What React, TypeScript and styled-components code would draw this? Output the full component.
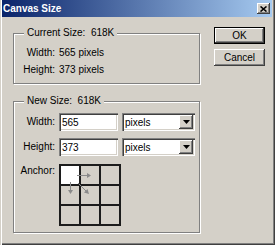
import styled, { createGlobalStyle } from "styled-components";

const GlobalStyle = createGlobalStyle`
  html, body {
    margin: 0;
    padding: 0;
    background: #d4d0c8;
  }
  body {
    font-family: "Liberation Sans", Arial, sans-serif;
    font-size: 10px;
    color: #000;
  }
`;

const Window = styled.div`
  width: 275px;
  height: 245px;
  box-sizing: border-box;
  background: #d4d0c8;
  padding: 0 3px 3px 2px;
  box-shadow: inset 1px 0 #d4d0c8, inset 2px 0 #fff, inset -1px -1px #404040,
    inset -2px -2px #808080;
  display: flex;
  flex-direction: column;
`;

const TitleBar = styled.div`
  height: 17px;
  flex: none;
  display: flex;
  align-items: center;
  justify-content: space-between;
  padding: 0 2px 0 1px;
  background: linear-gradient(to right, #0a246a, #a6caf0);
`;

const Title = styled.span`
  color: #fff;
  font-weight: bold;
  font-size: 10px;
`;

const CloseButton = styled.div`
  width: 13px;
  height: 11px;
  display: flex;
  align-items: center;
  justify-content: center;
  background: #d4d0c8;
  box-shadow: inset -1px -1px #404040, inset 1px 1px #fff, inset -2px -2px #808080;
`;

const Body = styled.div`
  display: flex;
  align-items: flex-start;
  gap: 14px;
  padding: 10px 0 0 11px;
`;

const LeftColumn = styled.div`
  width: 187px;
  display: flex;
  flex-direction: column;
  gap: 11px;
`;

const ButtonColumn = styled.div`
  width: 51px;
  display: flex;
  flex-direction: column;
  gap: 5px;
`;

const Button = styled.div<{ $default?: boolean }>`
  height: 17px;
  box-sizing: border-box;
  display: flex;
  align-items: center;
  justify-content: center;
  background: #d4d0c8;
  border: ${(p) => (p.$default ? "1px solid #000" : "none")};
  box-shadow: inset -1px -1px #404040, inset 1px 1px #fff, inset -2px -2px #808080;
`;

const Group = styled.fieldset<{ $pad: string }>`
  margin: 0;
  min-width: 0;
  padding: ${(p) => p.$pad};
  border: 1px solid #808080;
  box-shadow: 1px 1px 0 #fff, inset 1px 1px 0 #fff;
`;

const Legend = styled.legend`
  margin-left: 10px;
  padding: 0 3px;
  line-height: 12px;
  background: #d4d0c8;
`;

const InfoGrid = styled.div`
  display: grid;
  grid-template-columns: 41px auto;
  column-gap: 4px;
  line-height: 17px;
`;

const FormGrid = styled.div`
  display: grid;
  grid-template-columns: 41px auto;
  column-gap: 4px;
  row-gap: 7px;
  align-items: center;
`;

const Label = styled.span<{ $top?: boolean }>`
  text-align: right;
  line-height: 12px;
  align-self: ${(p) => (p.$top ? "start" : "center")};
  margin-top: ${(p) => (p.$top ? "2px" : "0")};
`;

const InfoLabel = styled.span`
  text-align: right;
`;

const Controls = styled.div`
  display: flex;
  gap: 4px;
`;

const sunken = `
  box-shadow: inset 1px 1px #808080, inset 2px 2px #404040, inset -1px -1px #fff,
    inset -2px -2px #d4d0c8;
`;

const TextInput = styled.input`
  width: 59px;
  height: 18px;
  box-sizing: border-box;
  border: none;
  outline: none;
  margin: 0;
  padding: 0 0 0 3px;
  font: inherit;
  color: #000;
  background: #fff;
  ${sunken}
`;

const Select = styled.div`
  width: 73px;
  height: 18px;
  box-sizing: border-box;
  display: flex;
  align-items: center;
  justify-content: space-between;
  padding: 0 2px 0 3px;
  background: #fff;
  ${sunken}
`;

const DropButton = styled.div`
  width: 14px;
  height: 14px;
  display: flex;
  align-items: center;
  justify-content: center;
  background: #d4d0c8;
  box-shadow: inset -1px -1px #404040, inset 1px 1px #fff, inset -2px -2px #808080;
`;

const AnchorWrap = styled.div`
  position: relative;
  width: 62px;
  height: 62px;
  margin-top: 1px;
`;

const AnchorGrid = styled.div`
  display: grid;
  grid-template-columns: repeat(3, 18px);
  grid-auto-rows: 18px;
  gap: 2px;
  padding: 2px;
  background: #1c1c1c;
`;

const Cell = styled.div<{ $active?: boolean }>`
  background: ${(p) => (p.$active ? "#fff" : "#d4d0c8")};
`;

const Arrows = styled.svg`
  position: absolute;
  left: 0;
  top: 0;
  pointer-events: none;
`;

const Combo = ({ value }: { value: string }) => (
  <Select>
    <span>{value}</span>
    <DropButton>
      <svg width="7" height="4" viewBox="0 0 7 4">
        <polygon points="0,0 7,0 3.5,4" fill="#000" />
      </svg>
    </DropButton>
  </Select>
);

export default function App() {
  return (
    <>
      <GlobalStyle />
      <Window>
        <TitleBar>
          <Title>Canvas Size</Title>
          <CloseButton>
            <svg width="7" height="6" viewBox="0 0 7 6">
              <path d="M0.5 0.5 L6.5 5.5 M6.5 0.5 L0.5 5.5" stroke="#000" strokeWidth="1.6" />
            </svg>
          </CloseButton>
        </TitleBar>
        <Body>
          <LeftColumn>
            <Group $pad="5px 0 5px 0">
              <Legend>Current Size:&nbsp; 618K</Legend>
              <InfoGrid>
                <InfoLabel>Width:</InfoLabel>
                <span>565 pixels</span>
                <InfoLabel>Height:</InfoLabel>
                <span>373 pixels</span>
              </InfoGrid>
            </Group>
            <Group $pad="6px 0 6px 0">
              <Legend>New Size:&nbsp; 618K</Legend>
              <FormGrid>
                <Label>Width:</Label>
                <Controls>
                  <TextInput readOnly value="565" />
                  <Combo value="pixels" />
                </Controls>
                <Label>Height:</Label>
                <Controls>
                  <TextInput readOnly value="373" />
                  <Combo value="pixels" />
                </Controls>
                <Label $top>Anchor:</Label>
                <AnchorWrap>
                  <AnchorGrid>
                    {Array.from({ length: 9 }, (_, i) => (
                      <Cell key={i} $active={i === 0} />
                    ))}
                  </AnchorGrid>
                  <Arrows width="62" height="62" viewBox="0 0 62 62">
                    <g stroke="#8a8a8a" fill="#8a8a8a" strokeWidth="1">
                      <line x1="18" y1="11.5" x2="29" y2="11.5" />
                      <polygon points="32,11.5 28,9 28,14" stroke="none" />
                      <line x1="11.5" y1="18" x2="11.5" y2="27" />
                      <polygon points="11.5,30 9,26 14,26" stroke="none" />
                      <line x1="19" y1="19" x2="27" y2="27" />
                      <polygon points="30,30 25,28.5 28.5,25" stroke="none" />
                    </g>
                  </Arrows>
                </AnchorWrap>
              </FormGrid>
            </Group>
          </LeftColumn>
          <ButtonColumn>
            <Button $default>OK</Button>
            <Button>Cancel</Button>
          </ButtonColumn>
        </Body>
      </Window>
    </>
  );
}
